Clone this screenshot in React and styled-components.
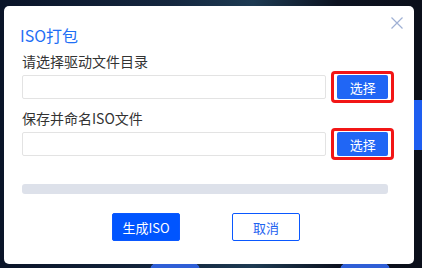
import React from 'react'
import styled, { createGlobalStyle } from 'styled-components'

const GlobalStyle = createGlobalStyle`
  html, body {
    margin: 0;
    padding: 0;
  }
  body {
    font-family: "Noto Sans CJK SC", "Noto Sans", sans-serif;
  }
`

const Backdrop = styled.div`
  width: 422px;
  height: 268px;
  overflow: hidden;
  background:
    radial-gradient(ellipse 40px 14px at 175px 268px, #2f5fd6 60%, transparent 62%),
    radial-gradient(ellipse 40px 14px at 365px 268px, #2f5fd6 60%, transparent 62%),
    linear-gradient(180deg, transparent 100px, #1e5ef0 100px, #1e5ef0 150px, transparent 150px) right / 8px 100% no-repeat,
    linear-gradient(90deg, #0a1428 0%, #14263e 40%, #1d3a52 60%, #0c1220 80%, #0b0f1a 100%);
  padding: 6px 8px 4px 4px;
  box-sizing: border-box;
`

const Dialog = styled.div`
  position: relative;
  width: 410px;
  height: 258px;
  background: #fff;
  border-radius: 5px;
  padding: 18px 20px 0 18px;
  box-sizing: border-box;
  display: flex;
  flex-direction: column;
`

const Title = styled.h2`
  margin: 0 0 0 -2px;
  font-size: 16px;
  font-weight: 400;
  color: #1f6ff5;
  line-height: 22px;
`

const Close = styled.button`
  position: absolute;
  top: 10px;
  right: 10px;
  width: 14px;
  height: 14px;
  padding: 0;
  border: 0;
  background: none;
  display: flex;
`

const Field = styled.div`
  margin-top: ${p => p.$top}px;
`

const Label = styled.div`
  font-size: 14px;
  color: #333;
  line-height: 19px;
`

const Row = styled.div`
  display: flex;
  align-items: center;
`

const Input = styled.input`
  width: 306px;
  height: 24px;
  box-sizing: border-box;
  border: 1px solid #e3e3e3;
  border-radius: 2px;
  outline: none;
  margin: 0;
`

const Highlight = styled.div`
  margin-left: 5px;
  width: 63px;
  height: 32px;
  box-sizing: border-box;
  border: 3px solid #f21616;
  border-radius: 4px;
  display: flex;
  align-items: center;
  justify-content: center;
`

const PickButton = styled.button`
  width: 51px;
  height: 24px;
  border: 0;
  border-radius: 2px;
  background: #2066f5;
  color: #fff;
  font-family: inherit;
  font-size: 13px;
  padding: 0;
`

const Progress = styled.div`
  margin-top: 24px;
  width: 366px;
  height: 10px;
  border-radius: 3px;
  background: #dde1ea;
`

const Actions = styled.div`
  display: flex;
  justify-content: center;
  gap: 52px;
  margin-top: 19px;
  padding-right: 4px;
`

const ActionButton = styled.button`
  width: 68px;
  height: 28px;
  box-sizing: border-box;
  border: 1px solid #0a58ff;
  border-radius: 2px;
  background: ${p => (p.$primary ? '#0055ff' : '#fff')};
  color: ${p => (p.$primary ? '#fff' : '#1f63f0')};
  font-family: inherit;
  font-size: 13px;
  padding: 0;
`

const PathField = ({ label, top }) => (
  <Field $top={top}>
    <Label>{label}</Label>
    <Row>
      <Input />
      <Highlight>
        <PickButton>选择</PickButton>
      </Highlight>
    </Row>
  </Field>
)

const App = () => (
  <>
    <GlobalStyle />
    <Backdrop>
      <Dialog>
        <Title>ISO打包</Title>
        <Close aria-label="close">
          <svg width="14" height="14" viewBox="0 0 14 14">
            <path d="M1.5 1.5 L12.5 12.5 M12.5 1.5 L1.5 12.5" stroke="#9fb0d4" strokeWidth="1.2" fill="none" />
          </svg>
        </Close>
        <PathField label="请选择驱动文件目录" top={6} />
        <PathField label="保存并命名ISO文件" top={6} />
        <Progress />
        <Actions>
          <ActionButton $primary>生成ISO</ActionButton>
          <ActionButton>取消</ActionButton>
        </Actions>
      </Dialog>
    </Backdrop>
  </>
)

export default App
